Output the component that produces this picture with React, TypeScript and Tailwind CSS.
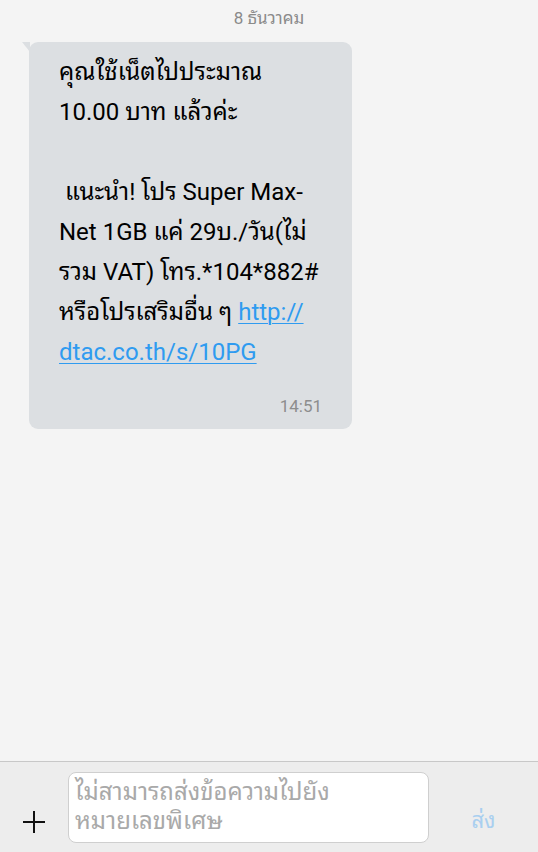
export default function App() {
  const link = "text-[#2f9bf0] underline decoration-1 underline-offset-[3px]";
  const lines: React.ReactNode[] = [
    "คุณใช้เน็ตไปประมาณ",
    "10.00 บาท แล้วค่ะ",
    "\u00a0",
    "\u00a0แนะนำ! โปร Super Max-",
    "Net 1GB แค่ 29บ./วัน(ไม่",
    "รวม VAT) โทร.*104*882#",
    <>
      หรือโปรเสริมอื่น ๆ <span className={link}>http://</span>
    </>,
    <span className={link}>dtac.co.th/s/10PG</span>,
  ];

  return (
    <div
      className="flex h-[852px] w-[538px] flex-col bg-[#f4f4f4] text-black"
      style={{ fontFamily: 'Roboto, "Noto Sans Thai Looped", "Noto Sans Thai", "Noto Sans", sans-serif' }}
    >
      <div className="flex-1 overflow-hidden">
        <div className="pt-[7px] text-center text-[17px] leading-[23px] text-[#8a8a8a]">8 ธันวาคม</div>

        <div className="relative ml-[29px] mt-[12px] w-[323px] rounded-[9px] bg-[#dcdfe2] pb-[11px] pl-[30px] pr-[30px] pt-[10px]">
          <div className="absolute left-[-7px] top-0 h-0 w-0 border-l-[8px] border-t-[10px] border-l-transparent border-t-[#dcdfe2]" />
          <div className="text-[24px] leading-[40px]">
            {lines.map((l, i) => (
              <div key={i} className="whitespace-nowrap">
                {l}
              </div>
            ))}
          </div>
          <div className="mt-[22px] text-right text-[17px] leading-[24px] text-[#8d8d8d]">14:51</div>
        </div>
      </div>

      <div className="flex h-[91px] items-center border-t border-[#c8c8c8] bg-[#ededed]">
        <div className="flex w-[68px] items-center justify-center self-end pb-[17px]">
          <svg width="26" height="26" viewBox="0 0 26 26" fill="none" stroke="#111" strokeWidth="2">
            <path d="M13 2v22M2 13h22" />
          </svg>
        </div>
        <div className="h-[71px] w-[361px] rounded-[8px] border border-[#cfcfcf] bg-white px-[6px] pt-[5px] text-[24px] leading-[29px] text-[#a9a9a9]">
          ไม่สามารถส่งข้อความไปยัง
          <br />
          หมายเลขพิเศษ
        </div>
        <div className="flex flex-1 items-center justify-center self-end pb-[15px] text-[22px] text-[#a9cff0]">ส่ง</div>
      </div>
    </div>
  );
}
